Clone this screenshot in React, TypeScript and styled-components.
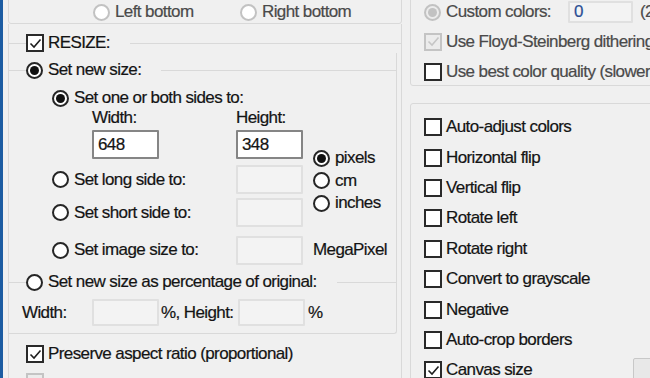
import React from 'react';
import styled, { createGlobalStyle } from 'styled-components';

const LINE = '#d9d9d9';
const TEXT = '#141414';
const DIM = '#4a4a4a';

const GlobalStyle = createGlobalStyle`
  html, body {
    margin: 0;
    padding: 0;
    background: #f0f0f0;
  }
  body {
    font-family: 'Liberation Sans', Arial, sans-serif;
    font-size: 17px;
    letter-spacing: -0.6px;
    -webkit-text-stroke: 0.2px currentColor;
    color: ${TEXT};
  }
`;

type OptionProps = {
  kind: 'radio' | 'check';
  checked?: boolean;
  disabled?: boolean;
  dim?: boolean;
  children?: React.ReactNode;
};

function Option({ kind, checked = false, disabled = false, dim = false, children }: OptionProps) {
  return (
    <OptionRow>
      {kind === 'radio' ? (
        <RadioMark $checked={checked} $disabled={disabled} />
      ) : (
        <CheckMark $disabled={disabled}>
          {checked && (
            <svg width="13" height="13" viewBox="0 0 13 13">
              <path
                d="M1.5 6.5 L5 10 L11.5 2.5"
                fill="none"
                stroke={disabled ? '#c6c6c6' : '#1e1e1e'}
                strokeWidth="1.6"
              />
            </svg>
          )}
        </CheckMark>
      )}
      {children && (
        <OptionLabel $dim={dim} $radio={kind === 'radio'}>
          {children}
        </OptionLabel>
      )}
    </OptionRow>
  );
}

const processOptions = [
  'Auto-adjust colors',
  'Horizontal flip',
  'Vertical flip',
  'Rotate left',
  'Rotate right',
  'Convert to grayscale',
  'Negative',
  'Auto-crop borders',
];

export default function App() {
  return (
    <>
      <GlobalStyle />
      <Window>
        <Column>
          <PositionBox>
            <Option kind="radio" disabled dim>
              Left bottom
            </Option>
            <Option kind="radio" disabled dim>
              Right bottom
            </Option>
          </PositionBox>

          <ResizeBox>
            <GroupHeader $mt={9}>
              <Option kind="check" checked>
                RESIZE:
              </Option>
            </GroupHeader>

            <InnerBox>
              <GroupHeader $mt={7}>
                <Option kind="radio" checked>
                  Set new size:
                </Option>
              </GroupHeader>

              <SizeGrid>
                <Cell $col="1 / 5" $row="1">
                  <Option kind="radio" checked>
                    Set one or both sides to:
                  </Option>
                </Cell>
                <Cell $col="2" $row="2">
                  Width:
                </Cell>
                <Cell $col="3" $row="2">
                  Height:
                </Cell>
                <Cell $col="2" $row="3" $top>
                  <TextBox readOnly value="648" />
                </Cell>
                <Cell $col="3" $row="3" $top>
                  <TextBox readOnly value="348" />
                </Cell>
                <Units>
                  <Option kind="radio" checked>
                    pixels
                  </Option>
                  <Option kind="radio">cm</Option>
                  <Option kind="radio">inches</Option>
                </Units>
                <Cell $col="1 / 3" $row="4">
                  <Option kind="radio">Set long side to:</Option>
                </Cell>
                <Cell $col="3" $row="4">
                  <TextBox readOnly value="" $disabled />
                </Cell>
                <Cell $col="1 / 3" $row="5">
                  <Option kind="radio">Set short side to:</Option>
                </Cell>
                <Cell $col="3" $row="5">
                  <TextBox readOnly value="" $disabled />
                </Cell>
                <Cell $col="1 / 3" $row="6">
                  <Option kind="radio">Set image size to:</Option>
                </Cell>
                <Cell $col="3" $row="6">
                  <TextBox readOnly value="" $disabled />
                </Cell>
                <Cell $col="4" $row="6">
                  MegaPixel
                </Cell>
              </SizeGrid>

              <GroupHeader $mt={1}>
                <Option kind="radio">Set new size as percentage of original:</Option>
              </GroupHeader>

              <PercentRow>
                <span>Width:</span>
                <TextBox readOnly value="" $disabled $h={27} />
                <PercentLabel>%, Height:</PercentLabel>
                <TextBox readOnly value="" $disabled $h={27} />
                <PercentLabel>%</PercentLabel>
              </PercentRow>
            </InnerBox>

            <BottomOption $mt={10}>
              <Option kind="check" checked>
                Preserve aspect ratio (proportional)
              </Option>
            </BottomOption>
            <BottomOption $mt={8}>
              <Option kind="check" disabled />
            </BottomOption>
          </ResizeBox>
        </Column>

        <Column>
          <ColorBox>
            <ColorRow>
              <Option kind="radio" checked disabled dim>
                Custom colors:
              </Option>
              <TextBox readOnly value="0" $disabled $h={22} $w={65} $blue />
              <RangeText>(2 - 256)</RangeText>
            </ColorRow>
            <Option kind="check" checked disabled dim>
              Use Floyd-Steinberg dithering
            </Option>
            <Option kind="check" dim>
              Use best color quality (slower)
            </Option>
          </ColorBox>

          <ProcessBox>
            {processOptions.map((label) => (
              <ProcessRow key={label}>
                <Option kind="check">{label}</Option>
              </ProcessRow>
            ))}
            <ProcessRow>
              <Option kind="check" checked>
                Canvas size
              </Option>
              <SettingsButton>Settings</SettingsButton>
            </ProcessRow>
          </ProcessBox>
        </Column>
      </Window>
    </>
  );
}

const Window = styled.div`
  width: 650px;
  height: 378px;
  overflow: hidden;
  box-sizing: border-box;
  border-left: 3px solid #1c5ca2;
  display: grid;
  grid-template-columns: 399px 1fr;
  column-gap: 8px;
  background: #f0f0f0;
`;

const Column = styled.div`
  display: flex;
  flex-direction: column;
  min-width: 0;
`;

const OptionRow = styled.div`
  display: flex;
  align-items: center;
  height: 20px;
  white-space: nowrap;
`;

const RadioMark = styled.span<{ $checked: boolean; $disabled: boolean }>`
  flex: none;
  box-sizing: border-box;
  width: 17px;
  height: 17px;
  border-radius: 50%;
  border: 2px solid ${(p) => (p.$disabled ? '#c2c2c2' : '#262626')};
  background: ${(p) => (p.$disabled && p.$checked ? '#ececec' : '#fff')};
  display: flex;
  align-items: center;
  justify-content: center;

  &::after {
    content: '';
    display: ${(p) => (p.$checked ? 'block' : 'none')};
    width: 9px;
    height: 9px;
    border-radius: 50%;
    background: ${(p) => (p.$disabled ? '#c2c2c2' : '#111')};
  }
`;

const CheckMark = styled.span<{ $disabled: boolean }>`
  flex: none;
  box-sizing: border-box;
  width: 18px;
  height: 18px;
  border: 2px solid ${(p) => (p.$disabled ? '#c4c4c4' : '#2a2a2a')};
  background: ${(p) => (p.$disabled ? '#ececec' : '#fff')};
  display: flex;
  align-items: center;
  justify-content: center;
`;

const OptionLabel = styled.span<{ $dim: boolean; $radio: boolean }>`
  margin-left: ${(p) => (p.$radio ? 5 : 4)}px;
  color: ${(p) => (p.$dim ? DIM : TEXT)};
  line-height: 18px;
`;

const PositionBox = styled.div`
  margin: -10px 0 0 5px;
  height: 34px;
  box-sizing: border-box;
  border: 1px solid ${LINE};
  border-radius: 3px;
  display: grid;
  grid-template-columns: 147px auto;
  align-content: end;
  padding: 0 0 1px 84px;
`;

const ResizeBox = styled.div`
  margin-left: 5px;
  display: flex;
  flex-direction: column;
  border: 1px solid ${LINE};
  border-top: none;
  padding-bottom: 20px;
`;

const InnerBox = styled.div`
  display: flex;
  flex-direction: column;
  margin-right: 4px;
  border-right: 1px solid ${LINE};
  border-bottom: 1px solid ${LINE};
  border-radius: 0 0 3px 0;
  padding-bottom: 5px;
`;

const GroupHeader = styled.div<{ $mt: number }>`
  display: flex;
  align-items: center;
  height: 20px;
  margin-top: ${(p) => p.$mt}px;

  &::before {
    content: '';
    width: 17px;
    height: 1px;
    background: ${LINE};
  }

  &::after {
    content: '';
    flex: 1;
    height: 1px;
    margin-left: 20px;
    background: ${LINE};
  }
`;

const SizeGrid = styled.div`
  display: grid;
  margin: 9px 0 0 43px;
  grid-template-columns: 40px 144px 77px auto;
  grid-template-rows: 18px 22px 34px 33px 33px 42px;
  align-items: center;
`;

const Cell = styled.div<{ $col: string; $row: string; $top?: boolean }>`
  grid-column: ${(p) => p.$col};
  grid-row: ${(p) => p.$row};
  align-self: ${(p) => (p.$top ? 'start' : 'center')};
  margin-top: ${(p) => (p.$top ? 1 : 0)}px;
  white-space: nowrap;
`;

const Units = styled.div`
  grid-column: 4;
  grid-row: 3 / 6;
  align-self: start;
  margin-top: 19px;
  display: flex;
  flex-direction: column;
  gap: 2.5px;
`;

const TextBox = styled.input<{ $disabled?: boolean; $h?: number; $w?: number; $blue?: boolean }>`
  box-sizing: border-box;
  width: ${(p) => p.$w ?? 67}px;
  height: ${(p) => p.$h ?? 29}px;
  margin: 0;
  padding: 0 4px;
  font: inherit;
  letter-spacing: inherit;
  color: ${(p) => (p.$blue ? '#2c4f95' : TEXT)};
  background: ${(p) => (p.$disabled ? '#f3f3f3' : '#fff')};
  border: 2px solid ${(p) => (p.$disabled ? '#e0e0e0' : '#858585')};
  border-radius: 1px;
  outline: none;
`;

const PercentRow = styled.div`
  display: grid;
  grid-template-columns: 70px 66px 80px 67px auto;
  align-items: center;
  height: 31px;
  margin-top: 5px;
  padding-left: 13px;
`;

const PercentLabel = styled.span`
  padding-left: 3px;
  white-space: nowrap;
`;

const BottomOption = styled.div<{ $mt: number }>`
  margin-top: ${(p) => p.$mt}px;
  padding-left: 17px;
`;

const ColorBox = styled.div`
  margin-top: -10px;
  width: 300px;
  height: 96px;
  box-sizing: border-box;
  border: 1px solid ${LINE};
  border-radius: 3px;
  padding: 10px 0 0 13px;
  display: flex;
  flex-direction: column;
  gap: 10.5px;
`;

const ColorRow = styled.div`
  display: grid;
  grid-template-columns: 144px 65px auto;
  align-items: center;
  height: 20px;
`;

const RangeText = styled.span`
  padding-left: 7px;
  white-space: nowrap;
  color: ${DIM};
`;

const ProcessBox = styled.div`
  margin-top: 17px;
  width: 330px;
  box-sizing: border-box;
  border: 1px solid ${LINE};
  border-radius: 3px;
  padding: 8px 0 20px 13px;
  display: flex;
  flex-direction: column;
`;

const ProcessRow = styled.div`
  display: flex;
  align-items: center;
  height: 30.4px;
`;

const SettingsButton = styled.button`
  margin: 3px 0 0 auto;
  align-self: flex-start;
  flex: none;
  width: 106px;
  height: 26px;
  font: inherit;
  letter-spacing: inherit;
  color: ${TEXT};
  background: #e8e8e8;
  border: 1px solid #c8c8c8;
  border-radius: 2px;
  padding: 0;
`;
